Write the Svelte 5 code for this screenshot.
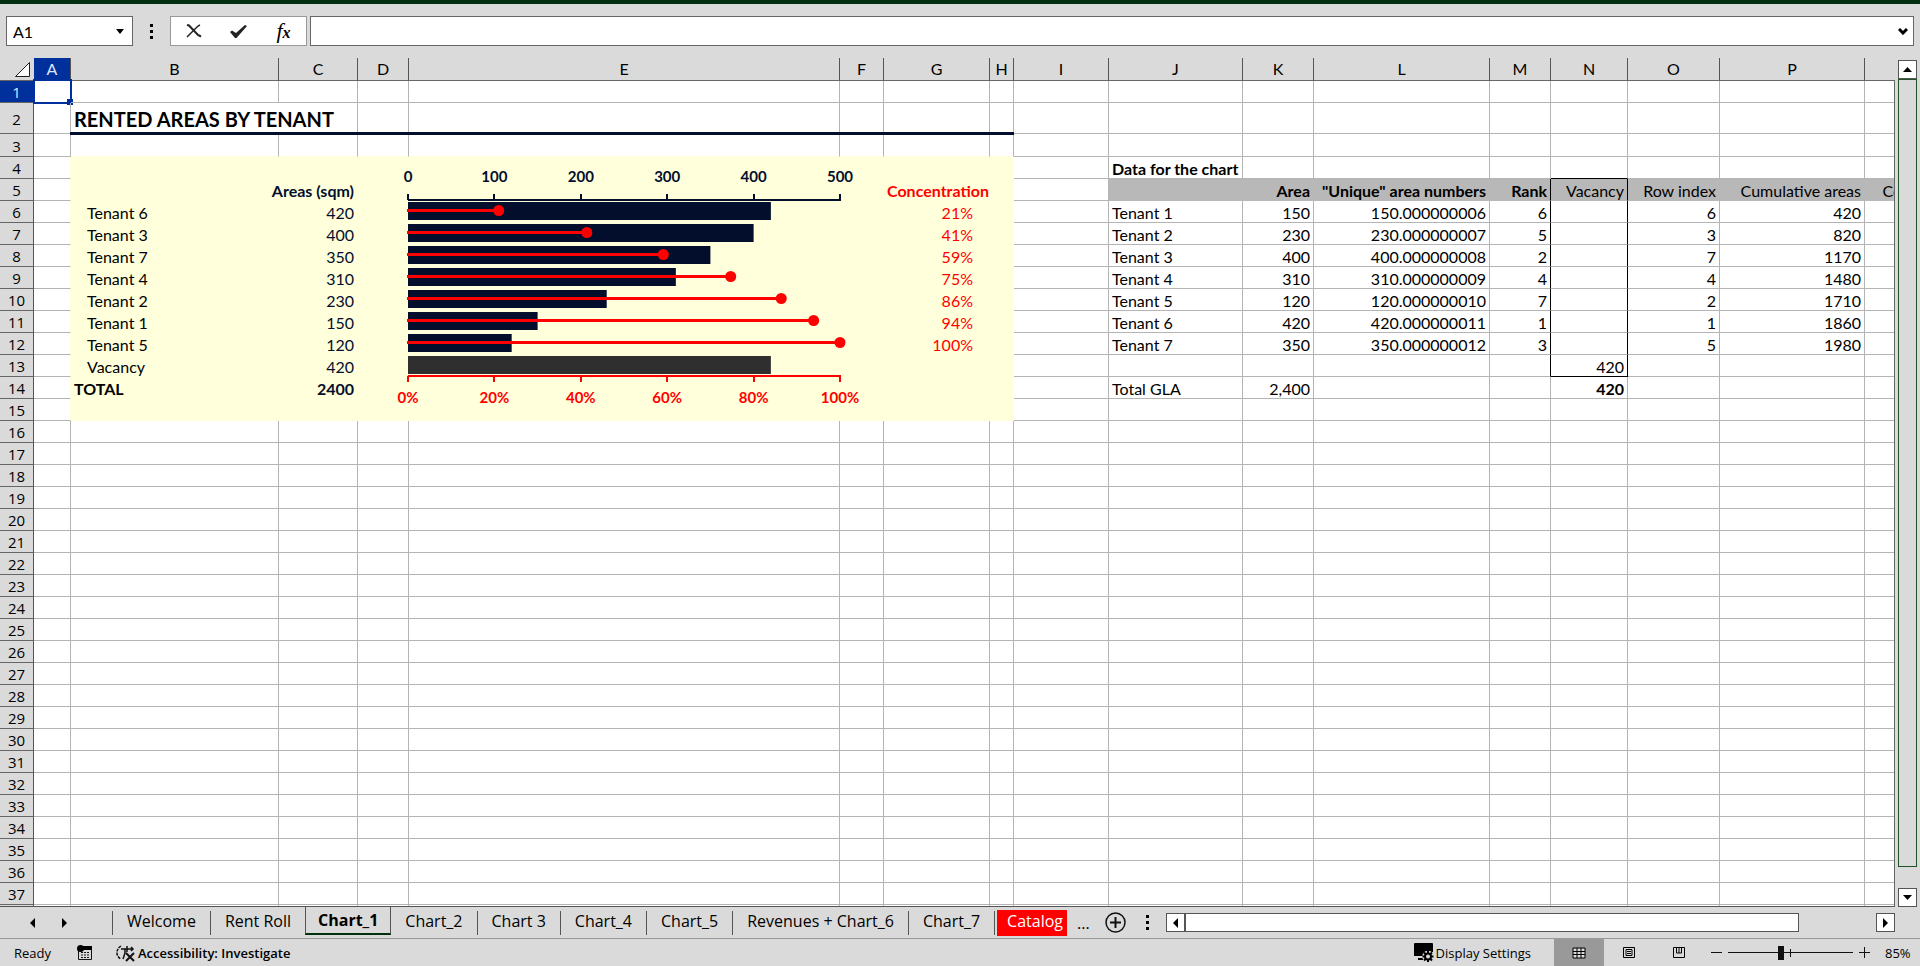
<script lang="ts">
    interface Cell {
        text: string;
        style: string;
    }

    interface Tenant {
        name: string;
        area: number;
        share: number;
    }

    interface Source {
        name: string;
        area: number;
        unique: string;
        rank: number;
        index: number;
        cumulative: number;
    }

    const columns = [
        { id: 'A', width: 37 },
        { id: 'B', width: 208 },
        { id: 'C', width: 79 },
        { id: 'D', width: 51 },
        { id: 'E', width: 431 },
        { id: 'F', width: 44 },
        { id: 'G', width: 106 },
        { id: 'H', width: 24 },
        { id: 'I', width: 95 },
        { id: 'J', width: 134 },
        { id: 'K', width: 71 },
        { id: 'L', width: 176 },
        { id: 'M', width: 61 },
        { id: 'N', width: 77 },
        { id: 'O', width: 92 },
        { id: 'P', width: 145 },
        { id: 'Q', width: 122 }
    ];
    const lastRow = 37;
    const rows = Array.from({ length: lastRow + 1 }, (_, i) => i + 1);

    const tenants: Tenant[] = [
        { name: 'Tenant 6', area: 420, share: 21 },
        { name: 'Tenant 3', area: 400, share: 41.4 },
        { name: 'Tenant 7', area: 350, share: 59.1 },
        { name: 'Tenant 4', area: 310, share: 74.7 },
        { name: 'Tenant 2', area: 230, share: 86.4 },
        { name: 'Tenant 1', area: 150, share: 93.9 },
        { name: 'Tenant 5', area: 120, share: 100 }
    ];

    const source: Source[] = [
        { name: 'Tenant 1', area: 150, unique: '150.000000006', rank: 6, index: 6, cumulative: 420 },
        { name: 'Tenant 2', area: 230, unique: '230.000000007', rank: 5, index: 3, cumulative: 820 },
        { name: 'Tenant 3', area: 400, unique: '400.000000008', rank: 2, index: 7, cumulative: 1170 },
        { name: 'Tenant 4', area: 310, unique: '310.000000009', rank: 4, index: 4, cumulative: 1480 },
        { name: 'Tenant 5', area: 120, unique: '120.000000010', rank: 7, index: 2, cumulative: 1710 },
        { name: 'Tenant 6', area: 420, unique: '420.000000011', rank: 1, index: 1, cumulative: 1860 },
        { name: 'Tenant 7', area: 350, unique: '350.000000012', rank: 3, index: 5, cumulative: 1980 }
    ];

    const cells: Record<string, Cell> = {
        B2: { text: 'RENTED AREAS BY TENANT', style: 'title' },
        B5: { text: 'Areas (sqm)', style: 'right bold navy' },
        G5: { text: 'Concentration', style: 'right bold red' },
        B13: { text: 'Vacancy', style: 'indent' },
        C13: { text: '420', style: 'right navy' },
        B14: { text: 'TOTAL', style: 'bold' },
        C14: { text: '2400', style: 'right bold navy' },
        J4: { text: 'Data for the chart', style: 'bold' },
        K5: { text: 'Area', style: 'right bold' },
        L5: { text: '"Unique" area numbers', style: 'right bold' },
        M5: { text: 'Rank', style: 'right bold' },
        N5: { text: 'Vacancy', style: 'right' },
        O5: { text: 'Row index', style: 'right' },
        P5: { text: 'Cumulative areas', style: 'right' },
        Q5: { text: 'Concentration', style: 'right' },
        N13: { text: '420', style: 'right' },
        J14: { text: 'Total GLA', style: '' },
        K14: { text: '2,400', style: 'right' },
        N14: { text: '420', style: 'right bold' }
    };

    tenants.forEach((t, i) => {
        cells['B' + (i + 6)] = { text: t.name, style: 'indent' };
        cells['C' + (i + 6)] = { text: String(t.area), style: 'right navy' };
        cells['G' + (i + 6)] = { text: Math.round(t.share) + '%', style: 'right red inset' };
    });

    source.forEach((s, i) => {
        const r = i + 6;
        cells['J' + r] = { text: s.name, style: '' };
        cells['K' + r] = { text: String(s.area), style: 'right' };
        cells['L' + r] = { text: s.unique, style: 'right' };
        cells['M' + r] = { text: String(s.rank), style: 'right' };
        cells['O' + r] = { text: String(s.index), style: 'right' };
        cells['P' + r] = { text: String(s.cumulative), style: 'right' };
    });

    // cells whose text runs on over the next column
    const wide = ['B2', 'B5'];

    // cells swallowed by a merged neighbour
    function merged(col: string, row: number) {
        return (col === 'C' && (row === 2 || row === 5)) || (col === 'E' && row > 4 && row <= 15);
    }

    function cellClass(col: string, row: number) {
        const list = [cells[col + row]?.style ?? ''];
        const panelCol = col >= 'B' && col <= 'H';
        if (panelCol && row === 2) list.push('rule');
        if (panelCol && row === 3) list.push('above-panel');
        if (panelCol && row >= 4 && row <= 15) list.push('panel');
        if (col === 'A' && row >= 4 && row <= 15) list.push('before-panel');
        if (col >= 'J' && row === 5) list.push('head');
        if (col === 'M' && row >= 5 && row <= 13) list.push('box-right');
        if (col === 'N' && row >= 5 && row <= 13) list.push('box-right');
        if (col === 'N' && (row === 4 || row === 13)) list.push('box-bottom');
        return list.join(' ').trim();
    }

    const plot = 432;
    const ticks = [0, 1, 2, 3, 4, 5];
    const bars = [...tenants.map((t) => t.area), 420];

    const sheets = ['Welcome', 'Rent Roll', 'Chart_1', 'Chart_2', 'Chart 3', 'Chart_4', 'Chart_5', 'Revenues + Chart_6', 'Chart_7', 'Catalog'];
    let active = $state('Chart_1');
    let zoom = $state(42);
</script>

<div class="app">
    <div class="formula-bar">
        <div class="name-box">
            <input type="text" value="A1" aria-label="Name box" />
            <button aria-label="Show names">
                <svg width="8" height="5" viewBox="0 0 8 5"><path d="M0 0h8L4 5z" /></svg>
            </button>
        </div>
        <svg class="grip" width="3" height="15" viewBox="0 0 3 15"><path d="M0 0h3v3H0zM0 6h3v3H0zM0 12h3v3H0z" /></svg>
        <div class="edit-buttons">
            <button aria-label="Cancel">
                <svg width="16" height="14" viewBox="0 0 16 14" fill="none" stroke="#222"><path d="M1 1l2 .5 9 9.500 3 1.500" stroke-width="2" /><path d="M14 1l-2 1-9 9-2 2" stroke-width="1.500" /></svg>
            </button>
            <button aria-label="Enter">
                <svg width="17" height="13" viewBox="0 0 17 13"><path fill="#222" d="M0 7l2-1.500 4 2.500L15 0l2 1L6.500 13H5z" /></svg>
            </button>
            <button class="fx" aria-label="Insert function"><i>f</i><i class="sub">x</i></button>
        </div>
        <div class="formula">
            <input type="text" aria-label="Formula" />
            <button aria-label="Expand formula bar">
                <svg width="10" height="7" viewBox="0 0 10 7" fill="none" stroke="#000" stroke-width="3"><path d="M1 1l4 4 4-4" /></svg>
            </button>
        </div>
    </div>

    <div class="body">
        <div class="sheet">
            <table>
                <colgroup>
                    <col style="width: 34px" />
                    {#each columns as c}
                        <col style="width: {c.width}px" />
                    {/each}
                </colgroup>
                <thead>
                    <tr>
                        <th class="corner">
                            <svg width="17" height="17" viewBox="0 0 17 17"><path d="M1.500 15.500h14v-14z" fill="#fff" stroke="#222" /></svg>
                        </th>
                        {#each columns as c}
                            <th class:selected={c.id === 'A'}>{c.id === 'Q' ? '' : c.id}</th>
                        {/each}
                    </tr>
                </thead>
                <tbody>
                    {#each rows as row}
                        <tr class:tall={row === 2} class:mid={row === 3}>
                            <th class:selected={row === 1}>{row > lastRow ? '' : row}</th>
                            {#each columns as c}
                                {#if c.id === 'E' && row === 4}
                                    <td class="panel chart" rowspan="12">
                                        <svg width="431" height="264" viewBox="1 0 431 264">
                                            {#each bars as value, i}
                                                <rect x="0" y={45 + i * 22} width={(value / 500) * plot} height="18" fill={i === 7 ? '#2f2f2f' : '#030e2d'} />
                                            {/each}
                                            <path d="M0 43H{plot + 1}" class="axis" />
                                            <path d="M0 219H{plot + 1}" class="axis pct" />
                                            {#each ticks as t}
                                                <path d="M{Math.round((t * plot) / 5)} 37v6" class="axis" />
                                                <path d="M{Math.round((t * plot) / 5)} 219v6" class="axis pct" />
                                                <text x={(t * plot) / 5} y="25">{t * 100}</text>
                                                <text x={(t * plot) / 5} y="246" class="pct">{t * 20}%</text>
                                            {/each}
                                            {#each tenants as t, i}
                                                <path d="M-1 {53.5 + i * 22}H{(t.share / 100) * plot}" class="lead" />
                                                <circle cx={(t.share / 100) * plot} cy={53.5 + i * 22} r="5.500" fill="#f00" />
                                            {/each}
                                        </svg>
                                    </td>
                                {:else if !merged(c.id, row)}
                                    <td class={cellClass(c.id, row)} colspan={wide.includes(c.id + row) ? 2 : 1}>
                                        {cells[c.id + row]?.text ?? ''}
                                        {#if c.id === 'A' && row === 1}
                                            <span class="cursor"></span>
                                        {/if}
                                    </td>
                                {/if}
                            {/each}
                        </tr>
                    {/each}
                </tbody>
            </table>
        </div>
        <div class="scroll-y">
            <button aria-label="Scroll up"><svg width="9" height="5" viewBox="0 0 9 5"><path d="M0 5h9L4.500 0z" /></svg></button>
            <div class="thumb"></div>
            <button aria-label="Scroll down"><svg width="9" height="5" viewBox="0 0 9 5"><path d="M0 0h9L4.500 5z" /></svg></button>
        </div>
    </div>

    <div class="tab-bar">
        <div class="tab-nav">
            <button aria-label="Previous sheet"><svg width="5" height="10" viewBox="0 0 5 10"><path d="M5 0v10L0 5z" /></svg></button>
            <button aria-label="Next sheet"><svg width="5" height="10" viewBox="0 0 5 10"><path d="M0 0v10l5-5z" /></svg></button>
        </div>
        {#each sheets as name}
            <button class="tab" class:active={active === name} class:catalog={name === 'Catalog'} onclick={() => (active = name)}>{name}</button>
        {/each}
        <button class="more" aria-label="More sheets">...</button>
        <button class="add" aria-label="New sheet">
            <svg width="21" height="21" viewBox="0 0 21 21" fill="none" stroke="#111"><circle cx="10.500" cy="10.500" r="9.500" stroke-width="1.500" /><path d="M10.500 5v11M5 10.500h11" stroke-width="2" /></svg>
        </button>
        <svg class="grip" width="3" height="15" viewBox="0 0 3 15"><path d="M0 0h3v3H0zM0 6h3v3H0zM0 12h3v3H0z" /></svg>
        <div class="scroll-x">
            <button aria-label="Scroll left"><svg width="5" height="10" viewBox="0 0 5 10"><path d="M5 0v10L0 5z" /></svg></button>
            <div class="thumb"></div>
            <button class="end" aria-label="Scroll right"><svg width="5" height="10" viewBox="0 0 5 10"><path d="M0 0v10l5-5z" /></svg></button>
        </div>
    </div>

    <div class="status">
        <span class="ready">Ready</span>
        <button class="macro" aria-label="Record macro">
            <svg width="16" height="16" viewBox="0 0 16 16"><path d="M1.500 5v9.500h13v-13H6" fill="none" stroke="#111" /><path d="M6 1h9v4H6z" /><circle cx="3.500" cy="3.500" r="3.500" /><path d="M4 7.500h8M4 10h8M4 12.500h8" stroke="#111" stroke-dasharray="2 1" /></svg>
        </button>
        <button class="access">
            <svg width="20" height="18" viewBox="0 0 20 18" fill="none" stroke="#111" stroke-width="1.500"><path d="M5 2C2 4 1 6 1 9s2 5 4 6" stroke-dasharray="3 1" /><path d="M5 5h12M9 5v4l-2 6M11 2v6M15 3l2 2-2 2" /><path d="M10 9l8 8M18 9l-8 8" stroke-width="2" /></svg>
            Accessibility: Investigate
        </button>
        <button class="display">
            <svg width="20" height="19" viewBox="0 0 20 19"><path d="M1 0h17a1 1 0 0 1 1 1v8h-8l-2 4H0V1a1 1 0 0 1 1-1zM4 15h5v2H4z" /><path d="M14 8v11M8.500 13.500h11M10 9.500l8 8M18 9.500l-8 8" stroke="#dadada" stroke-width="4" /><path d="M14 8v11M8.500 13.500h11M10 9.500l8 8M18 9.500l-8 8" stroke="#000" stroke-width="2" /><circle cx="14" cy="13.500" r="3" fill="#dadada" stroke="#000" stroke-width="2" /></svg>
            Display Settings
        </button>
        <button class="view on" aria-label="Normal view">
            <svg width="14" height="12" viewBox="0 0 14 12"><path d="M1 1h12v10H1z" fill="#dadada" stroke="#000" /><path d="M1 4.500h12M1 7.500h12M5 1v10M9 1v10" stroke="#000" /></svg>
        </button>
        <button class="view" aria-label="Page layout">
            <svg width="12" height="11" viewBox="0 0 12 11" fill="none" stroke="#000"><path d="M.5.5h11v10H.5z" /><path d="M3 2.500h6v6H3zM4 4.500h4M4 6.500h4" /></svg>
        </button>
        <button class="view" aria-label="Page break preview">
            <svg width="12" height="11" viewBox="0 0 12 11" fill="none" stroke="#000"><path d="M.5.5h11v10H.5zM3.500 0v6h5V0M6 0v6" /></svg>
        </button>
        <button class="step minus" aria-label="Zoom out"><svg width="11" height="11" viewBox="0 0 11 11"><path d="M0 5.500h11" stroke="#111" /></svg></button>
        <input class="zoom" type="range" min="0" max="100" bind:value={zoom} aria-label="Zoom" />
        <button class="step" aria-label="Zoom in"><svg width="11" height="11" viewBox="0 0 11 11"><path d="M0 5.500h11M5.500 0v11" stroke="#111" /></svg></button>
        <span class="percent">85%</span>
    </div>
</div>

<style>
    :global(body) {
        margin: 0;
        background: #dadada;
    }

    .app {
        display: flex;
        flex-direction: column;
        height: 100vh;
        box-sizing: border-box;
        border-top: 4px solid #00300f;
        background: #dadada;
        color: #000;
        font-family: Lato, sans-serif;
        font-size: 16px;
        overflow: hidden;
    }

    button {
        display: flex;
        align-items: center;
        justify-content: center;
        flex: none;
        padding: 0;
        border: 0;
        background: none;
        color: inherit;
        font: inherit;
        white-space: nowrap;
    }

    svg {
        display: block;
        flex: none;
    }

    /* formula bar */
    .formula-bar {
        display: flex;
        align-items: center;
        flex: none;
        padding: 12px 6px;
    }

    .name-box,
    .edit-buttons,
    .formula {
        display: flex;
        box-sizing: border-box;
        height: 30px;
        border: 1px solid #666;
        background: #fff;
    }

    .name-box {
        width: 127px;
        margin-right: 17px;
    }

    .name-box input,
    .formula input {
        flex: 1;
        min-width: 0;
        padding: 0 6px;
        border: 0;
        outline: 0;
        background: none;
        font: inherit;
    }

    .name-box button {
        width: 24px;
    }

    .edit-buttons {
        width: 137px;
        margin: 0 3px 0 17px;
        border-color: #999;
    }

    .edit-buttons button {
        flex: 1;
    }

    .fx {
        font-family: "Liberation Serif", serif;
        font-size: 22px;
        line-height: 20px;
    }

    .fx .sub {
        padding-top: 4px;
        font-size: 16px;
        font-weight: bold;
    }

    .formula {
        flex: 1;
    }

    .formula button {
        width: 20px;
    }

    /* grid */
    .body {
        display: flex;
        flex: 1;
        min-height: 0;
    }

    .sheet {
        position: relative;
        flex: 1;
        min-width: 0;
        overflow: hidden;
        border-bottom: 1px solid #555;
    }

    .sheet::after {
        content: "";
        position: absolute;
        top: 22px;
        right: 0;
        bottom: 0;
        width: 1px;
        background: #666;
    }

    table {
        width: 1987px;
        table-layout: fixed;
        border-collapse: separate;
        border-spacing: 0;
        background: #fff;
    }

    th,
    td {
        box-sizing: border-box;
        height: 22px;
        line-height: 19px;
        white-space: nowrap;
    }

    th {
        padding: 2px 0 0;
        border-right: 1px solid #555;
        border-bottom: 1px solid #666;
        background: #dadada;
        font-family: "Open Sans", sans-serif;
        font-size: 15px;
        font-weight: normal;
        text-align: center;
    }

    thead th {
        height: 23px;
        padding: 0;
        font-family: Lato, sans-serif;
        font-size: 16px;
        line-height: 22px;
    }

    th.selected {
        background: #00309b;
        color: #dce6ff;
    }

    th.corner {
        padding-left: 14px;
        border-right-color: #dadada;
    }

    td {
        position: relative;
        padding: 2px 3px 0;
        border-right: 1px solid #b4b4b4;
        border-bottom: 1px solid #b4b4b4;
    }

    .tall > * {
        height: 31px;
    }

    .mid > * {
        height: 23px;
    }

    .title {
        font-size: 20px;
        font-weight: bold;
    }

    .right {
        text-align: right;
    }

    .bold {
        font-weight: bold;
    }

    .navy {
        color: #030e2d;
    }

    .red {
        color: #f00;
    }

    .indent {
        padding-left: 16px;
    }

    .inset {
        padding-right: 16px;
    }

    .rule::after {
        content: "";
        position: absolute;
        right: -1px;
        bottom: -2px;
        left: -1px;
        z-index: 1;
        height: 3px;
        background: #030e2d;
    }

    .above-panel {
        border-bottom-color: #ffffdb;
    }

    .before-panel {
        border-right-color: #ffffdb;
    }

    .panel {
        border-color: #ffffdb;
        background: #ffffdb;
    }

    .head {
        border-color: #b8b8b8;
        background: #b8b8b8;
    }

    .box-right {
        border-right-color: #000;
    }

    .box-bottom {
        border-bottom-color: #000;
    }

    .chart {
        padding: 0;
        border: 0;
        vertical-align: top;
    }

    .chart svg {
        position: relative;
        z-index: 1;
        overflow: visible;
    }

    .chart text {
        fill: #030e2d;
        font-size: 15px;
        font-weight: bold;
        text-anchor: middle;
    }

    .chart text.pct {
        fill: #f00;
    }

    .axis {
        stroke: #030e2d;
        stroke-width: 2;
    }

    .axis.pct {
        stroke: #f00;
    }

    .lead {
        stroke: #f00;
        stroke-width: 3;
    }

    .cursor {
        position: absolute;
        inset: -2px -2px -2px -1px;
        border: 2px solid #00309b;
    }

    .cursor::after {
        content: "";
        position: absolute;
        right: -3px;
        bottom: -3px;
        width: 6px;
        height: 6px;
        background: #00309b;
    }

    /* scroll bars */
    .scroll-y {
        display: flex;
        flex-direction: column;
        flex: none;
        width: 19px;
        padding: 2px 3px 0;
    }

    .scroll-y button,
    .scroll-x button {
        box-sizing: border-box;
        width: 19px;
        height: 19px;
        border: 1px solid #555;
        background: #fff;
    }

    .scroll-y .thumb {
        flex: 1;
        margin-bottom: 21px;
        border: 1px solid #1d5428;
    }

    .scroll-x {
        display: flex;
        flex: 1;
        margin: 0 25px 0 17px;
    }

    .scroll-x .thumb {
        flex: 1;
        border: 1px solid #555;
        background: #fff;
    }

    .scroll-x .end {
        margin-left: 77px;
    }

    /* sheet tabs */
    .tab-bar {
        display: flex;
        align-items: center;
        flex: none;
        height: 31px;
        font-family: "Open Sans", sans-serif;
    }

    .tab-nav {
        display: flex;
        align-items: center;
        justify-content: center;
        gap: 27px;
        box-sizing: border-box;
        width: 113px;
        height: 24px;
        padding-right: 16px;
        border-right: 1px solid #555;
    }

    .tab {
        height: 24px;
        padding: 0 14px 4px;
        border-right: 1px solid #555;
        line-height: 20px;
    }

    .tab.active {
        align-self: flex-start;
        height: 29px;
        margin: -1px 0 0 -1px;
        padding: 0 12px;
        border-left: 1px solid #555;
        border-bottom: 2px solid #00300f;
        background: #dadada;
        font-weight: bold;
    }

    .tab.catalog {
        height: 26px;
        margin-left: 2px;
        padding: 0 4px 4px 10px;
        border: 0;
        background: #f00;
        color: #fff;
    }

    .more {
        margin: 0 15px 0 10px;
    }

    .add {
        margin-right: 20px;
    }

    /* status bar */
    .status {
        display: flex;
        align-items: center;
        flex: none;
        height: 27px;
        border-top: 1px solid #999;
        font-family: "Open Sans", sans-serif;
        font-size: 13px;
    }

    .ready {
        width: 63px;
        padding-left: 14px;
    }

    .macro {
        margin-right: 23px;
    }

    .access {
        gap: 2px;
        font-weight: 600;
    }

    .display {
        gap: 2px;
        margin: 0 23px 0 auto;
    }

    .view {
        width: 50px;
        height: 27px;
    }

    .view.on {
        background: #999;
    }

    .step.minus {
        margin-left: 7px;
    }

    .zoom {
        width: 125px;
        height: 20px;
        margin: 0 6px;
        appearance: none;
        background:
            linear-gradient(#111, #111) 62px 6px / 1px 8px no-repeat,
            linear-gradient(#111, #111) 0 9px / 100% 1px no-repeat;
    }

    .zoom::-webkit-slider-thumb {
        appearance: none;
        width: 6px;
        height: 14px;
        background: #111;
    }

    .percent {
        width: 35px;
        padding-left: 15px;
    }
</style>
